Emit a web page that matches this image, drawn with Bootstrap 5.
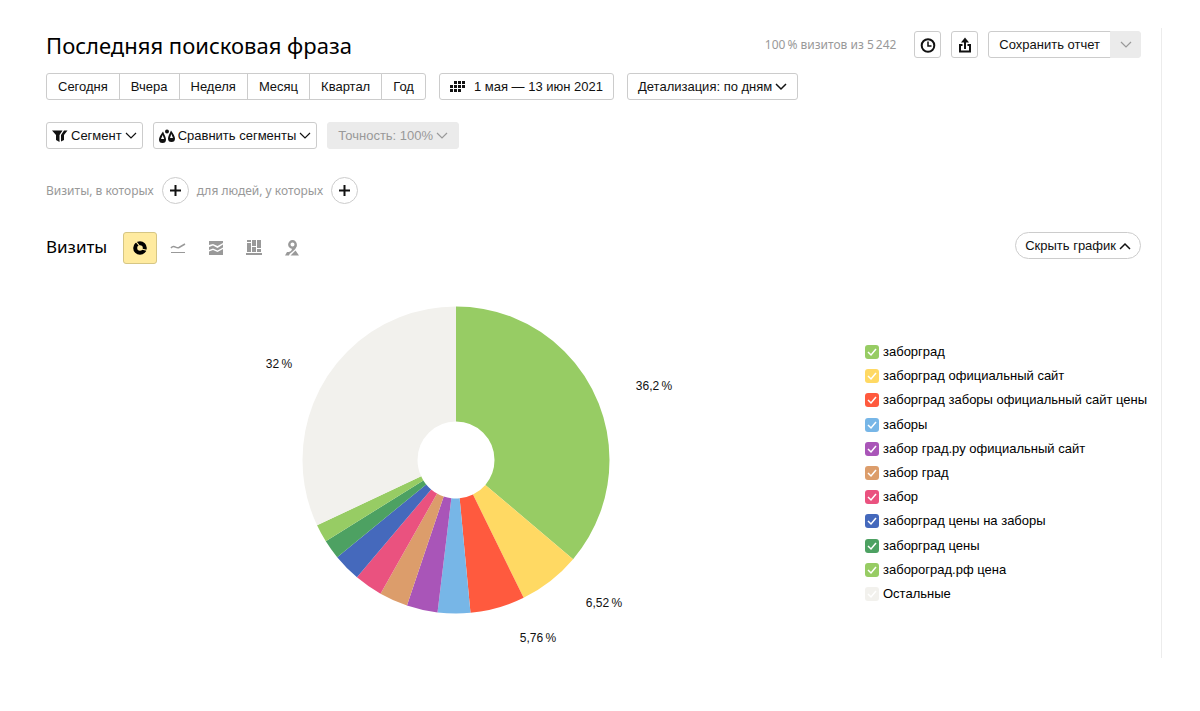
<!DOCTYPE html>
<html lang="ru">
<head>
<meta charset="utf-8">
<meta name="viewport" content="width=device-width, initial-scale=1">
<title>Последняя поисковая фраза</title>
<link href="https://cdn.jsdelivr.net/npm/bootstrap@5.3.0/dist/css/bootstrap.min.css" rel="stylesheet">
<style>
  body { font-family: "Liberation Sans", Arial, sans-serif; font-size: 13px; line-height: 16px; color: #000; background: #fff; }
  svg { display: block; flex: none; }
  .report { margin: 28px 38px 0 0; padding: 3px 20px 8px 46px; border-right: 1px solid #ececec; }
  .report-title { font: 400 22px/26px "Noto Sans", sans-serif; }
  .metric-title { font: 400 17px/30px "Noto Sans", sans-serif; }
  .hint { font: 400 12px/26px "Noto Sans", sans-serif; color: #999; }
  .btn {
    --bs-btn-font-size: 13px; --bs-btn-line-height: 16px;
    --bs-btn-padding-x: 10px; --bs-btn-padding-y: 0px;
    --bs-btn-border-radius: 3px; --bs-btn-color: #111; --bs-btn-bg: #fff;
    --bs-btn-border-color: #ccc; --bs-btn-hover-bg: #f7f7f7; --bs-btn-hover-border-color: #aaa;
    --bs-btn-disabled-bg: #ebebeb; --bs-btn-disabled-border-color: #ebebeb; --bs-btn-disabled-color: #999; --bs-btn-disabled-opacity: 1;
    height: 27px; display: inline-flex; align-items: center; justify-content: center; white-space: nowrap;
  }
  .period .btn { --bs-btn-padding-x: 11px; }
  .btn-tight { --bs-btn-padding-x: 5px; }
  .btn-square, .btn-circle { width: 27px; --bs-btn-padding-x: 0px; }
  .btn-circle { --bs-btn-border-radius: 50%; }
  .btn-caret { width: 31px; --bs-btn-padding-x: 0px; }
  .btn-pill { --bs-btn-border-radius: 14px; --bs-btn-padding-x: 9px; }
  .btn-view { width: 34px; height: 32px; --bs-btn-padding-x: 0px; --bs-btn-bg: transparent; --bs-btn-border-color: transparent; --bs-btn-color: #999;
    --bs-btn-active-bg: #ffeba0; --bs-btn-active-border-color: #d6c684; --bs-btn-active-color: #000; }
  .gap-icon { gap: 3px; }
  .gap-tool { gap: 10px; }
  .gap-range { gap: 13px; }
  .views { gap: 4px; }
  .row-header { margin-bottom: 15px; }
  .row-range { margin-bottom: 22px; }
  .row-filters, .row-people { margin-bottom: 28px; }
  .legend { width: 276px; height: 258px; white-space: nowrap; }
  .legend-check.form-check-input { width: 14px; height: 14px; margin: 0; border: 0; border-radius: 3px; flex: none; background-color: var(--tint); background-size: 14px; }
  .legend-check.form-check-input:checked[type=checkbox] { background-image: url("data:image/svg+xml,%3csvg xmlns='http://www.w3.org/2000/svg' viewBox='0 0 14 14'%3e%3cpath fill='none' stroke='%23fff' stroke-width='1.500' d='M3 7l3 3 5-6'/%3e%3c/svg%3e"); }
  .chart text { font-size: 12px; text-anchor: middle; fill: #111; }
  .chart circle { fill: none; stroke-width: 115; }
</style>
</head>
<body>
<main class="report">
  <header class="d-flex align-items-center gap-tool row-header">
    <h1 class="report-title mb-0 me-auto">Последняя поисковая фраза</h1>
    <span class="hint me-2">100&#8201;% визитов из 5&#8201;242</span>
    <button type="button" class="btn btn-square" aria-label="История">
      <svg width="16" height="16" viewBox="0 0 16 16" fill="none" stroke="currentColor" stroke-width="2"><circle cx="8" cy="8.500" r="6.300"/><path d="M8 4.500V9h3.500" stroke-width="1.500"/></svg>
    </button>
    <button type="button" class="btn btn-square" aria-label="Экспорт">
      <svg width="16" height="18" viewBox="0 0 16 18" fill="none" stroke="currentColor" stroke-width="2"><path d="M5.500 9H3v6.500h10V9h-2.500M8 13V5"/><path d="M8 1.500l4 5H4z" fill="currentColor" stroke="none"/></svg>
    </button>
    <div class="btn-group">
      <button type="button" class="btn">Сохранить отчет</button>
      <button type="button" class="btn btn-caret" disabled aria-label="Другие действия">
        <svg width="12" height="8" viewBox="0 0 12 8" fill="none" stroke="currentColor" stroke-width="1.200"><path d="M1 1l5 5 5-5"/></svg>
      </button>
    </div>
  </header>

  <div class="d-flex flex-wrap gap-range row-range">
    <div class="btn-group period" role="group" aria-label="Период">
      <button type="button" class="btn">Сегодня</button>
      <button type="button" class="btn">Вчера</button>
      <button type="button" class="btn">Неделя</button>
      <button type="button" class="btn">Месяц</button>
      <button type="button" class="btn">Квартал</button>
      <button type="button" class="btn">Год</button>
    </div>
    <button type="button" class="btn gap-2">
      <svg width="16" height="12" viewBox="0 0 16 12" fill="currentColor"><path d="M4 0h3v3H4zM8 0h3v3H8zM12 0h3v3h-3zM0 4h3v3H0zM4 4h3v3H4zM8 4h3v3H8zM12 4h3v3h-3zM0 8h3v3H0zM4 8h3v3H4zM8 8h3v3H8z"/></svg>
      1 мая — 13 июн 2021
    </button>
    <button type="button" class="btn gap-icon">Детализация: по дням
      <svg width="12" height="8" viewBox="0 0 12 8" fill="none" stroke="currentColor" stroke-width="1.500"><path d="M1 1l5 5 5-5"/></svg>
    </button>
  </div>

  <div class="d-flex flex-wrap gap-tool row-filters">
    <button type="button" class="btn btn-tight gap-icon">
      <svg width="16" height="14" viewBox="0 0 16 14" fill="currentColor"><path d="M0 1.500h10.500L7.500 6v7L4 11V6zM12 1.500h3.500L12 6v5L9 12.500V6z"/></svg>
      Сегмент
      <svg width="12" height="8" viewBox="0 0 12 8" fill="none" stroke="currentColor" stroke-width="1.200"><path d="M1 1l5 5 5-5"/></svg>
    </button>
    <button type="button" class="btn btn-tight gap-icon">
      <svg width="16" height="14" viewBox="0 0 16 14" fill="currentColor"><circle cx="8" cy="2.500" r="2"/><path fill-rule="evenodd" d="M4 2.500C1.500 6 0 8.500 0 10.500A3.500 3.500 0 0 0 7 10.500C7 8.500 5.500 6 4 2.500zM3.700 6L5.200 10H2zM12 1.500C10.500 5 9 7.500 9 9.500A3.500 3.500 0 0 0 16 9.500C16 7.500 14.500 5 12 1.500zM12.300 5L14 9H11z"/></svg>
      Сравнить сегменты
      <svg width="12" height="8" viewBox="0 0 12 8" fill="none" stroke="currentColor" stroke-width="1.200"><path d="M1 1l5 5 5-5"/></svg>
    </button>
    <button type="button" class="btn gap-icon" disabled>Точность: 100%
      <svg width="12" height="8" viewBox="0 0 12 8" fill="none" stroke="currentColor" stroke-width="1.200"><path d="M1 1l5 5 5-5"/></svg>
    </button>
  </div>

  <div class="d-flex flex-wrap align-items-center gap-2 row-people">
    <span class="hint">Визиты, в которых</span>
    <button type="button" class="btn btn-circle" aria-label="Добавить условие для визитов">
      <svg width="11" height="11" viewBox="0 0 11 11" stroke="currentColor" stroke-width="2"><path d="M5.500 0v11M0 5.500h11"/></svg>
    </button>
    <span class="hint">для людей, у которых</span>
    <button type="button" class="btn btn-circle" aria-label="Добавить условие для людей">
      <svg width="11" height="11" viewBox="0 0 11 11" stroke="currentColor" stroke-width="2"><path d="M5.500 0v11M0 5.500h11"/></svg>
    </button>
  </div>

  <div class="d-flex align-items-start mb-3">
    <h2 class="metric-title mb-0 me-3">Визиты</h2>
    <div class="d-flex views me-auto" role="group" aria-label="Вид графика">
      <button type="button" class="btn btn-view active" aria-label="Круговая диаграмма">
        <svg width="16" height="16" viewBox="0 0 16 16" fill="none" stroke="currentColor"><circle cx="8" cy="8" r="4.800" stroke-width="4"/><path d="M7.500 6L3.500 1M9.500 9l6 1.500" stroke="#ffeba0" stroke-width="1.200"/></svg>
      </button>
      <button type="button" class="btn btn-view" aria-label="Линии">
        <svg width="16" height="16" viewBox="0 0 16 16" fill="none" stroke="currentColor"><path d="M1 8c3-4 5 1 8-.5L15 4" stroke-width="1.500"/><path d="M1 12.500h14"/></svg>
      </button>
      <button type="button" class="btn btn-view" aria-label="Области">
        <svg width="16" height="16" viewBox="0 0 16 16" fill="currentColor"><path d="M1 1h14v2L9.500 6 5 4 1 5zM1 7l4-1.500L9.500 8 15 4.500v3L9.500 10.500 5 8.500 1 10zM1 11.500l4-1.500 4.500 2L15 9v6H1z"/></svg>
      </button>
      <button type="button" class="btn btn-view" aria-label="Столбцы">
        <svg width="16" height="16" viewBox="0 0 16 16" fill="currentColor"><path d="M0 13h16v2H0zM1 0h4v2H1zM1 3h4v9H1zM6 0h4v6H6zM6 7h4v5H6zM11 0h4v8h-4zM11 9h4v3h-4z"/></svg>
      </button>
      <button type="button" class="btn btn-view" aria-label="Карта">
        <svg width="16" height="16" viewBox="0 0 16 16"><circle cx="8.500" cy="4.500" r="3.200" fill="none" stroke="currentColor" stroke-width="2.400"/><path d="M12.800 5C12.500 9 9 11.500 5.500 14L8.500 8zM1 15.500L3 12h2l2-1-2 4.500zM6.500 15.500l5-5 3.500 5z" fill="currentColor"/></svg>
      </button>
    </div>
    <button type="button" class="btn btn-pill gap-icon">Скрыть график
      <svg width="12" height="8" viewBox="0 0 12 8" fill="none" stroke="currentColor" stroke-width="1.500"><path d="M1 7l5-5 5 5"/></svg>
    </button>
  </div>

  <div class="d-flex flex-wrap align-items-center">
    <div class="flex-fill d-flex justify-content-center">
      <svg class="chart" width="500" height="370" viewBox="-250 -180 500 370" role="img" aria-label="Доли поисковых фраз">
        <!-- each slice is an arc of a thick ring: dash length and offset are in degrees -->
        <g transform="rotate(-90)">
          <circle r="96" pathLength="360" stroke="#97cc64" stroke-dasharray="130.300 360"/>
          <circle r="96" pathLength="360" stroke="#ffd963" stroke-dasharray="23.500 360" stroke-dashoffset="-130.300"/>
          <circle r="96" pathLength="360" stroke="#ff5a3e" stroke-dasharray="20.700 360" stroke-dashoffset="-153.800"/>
          <circle r="96" pathLength="360" stroke="#77b6e7" stroke-dasharray="12.500 360" stroke-dashoffset="-174.500"/>
          <circle r="96" pathLength="360" stroke="#a955b8" stroke-dasharray="11.700 360" stroke-dashoffset="-187"/>
          <circle r="96" pathLength="360" stroke="#dc9d6b" stroke-dasharray="10.800 360" stroke-dashoffset="-198.700"/>
          <circle r="96" pathLength="360" stroke="#ea527f" stroke-dasharray="10.700 360" stroke-dashoffset="-209.500"/>
          <circle r="96" pathLength="360" stroke="#4569bc" stroke-dasharray="10.500 360" stroke-dashoffset="-220.200"/>
          <circle r="96" pathLength="360" stroke="#4da162" stroke-dasharray="7.300 360" stroke-dashoffset="-230.700"/>
          <circle r="96" pathLength="360" stroke="#97cc64" stroke-dasharray="6.800 360" stroke-dashoffset="-238"/>
          <circle r="96" pathLength="360" stroke="#f2f1ed" stroke-dasharray="115.200 360" stroke-dashoffset="-244.800"/>
        </g>
        <text x="198" y="-70">36,2&#8201;%</text>
        <text x="148" y="147">6,52&#8201;%</text>
        <text x="82" y="182">5,76&#8201;%</text>
        <text x="-177" y="-92">32&#8201;%</text>
      </svg>
    </div>
    <ul class="legend list-unstyled d-flex flex-column justify-content-between mt-3 mb-0">
      <li><label class="d-flex align-items-center gap-1"><input class="form-check-input legend-check" style="--tint:#97cc64" type="checkbox" checked>заборград</label></li>
      <li><label class="d-flex align-items-center gap-1"><input class="form-check-input legend-check" style="--tint:#ffd963" type="checkbox" checked>заборград официальный сайт</label></li>
      <li><label class="d-flex align-items-center gap-1"><input class="form-check-input legend-check" style="--tint:#ff5a3e" type="checkbox" checked>заборград заборы официальный сайт цены</label></li>
      <li><label class="d-flex align-items-center gap-1"><input class="form-check-input legend-check" style="--tint:#77b6e7" type="checkbox" checked>заборы</label></li>
      <li><label class="d-flex align-items-center gap-1"><input class="form-check-input legend-check" style="--tint:#a955b8" type="checkbox" checked>забор град.ру официальный сайт</label></li>
      <li><label class="d-flex align-items-center gap-1"><input class="form-check-input legend-check" style="--tint:#dc9d6b" type="checkbox" checked>забор град</label></li>
      <li><label class="d-flex align-items-center gap-1"><input class="form-check-input legend-check" style="--tint:#ea527f" type="checkbox" checked>забор</label></li>
      <li><label class="d-flex align-items-center gap-1"><input class="form-check-input legend-check" style="--tint:#4569bc" type="checkbox" checked>заборград цены на заборы</label></li>
      <li><label class="d-flex align-items-center gap-1"><input class="form-check-input legend-check" style="--tint:#4da162" type="checkbox" checked>заборград цены</label></li>
      <li><label class="d-flex align-items-center gap-1"><input class="form-check-input legend-check" style="--tint:#97cc64" type="checkbox" checked>забороград.рф цена</label></li>
      <li><label class="d-flex align-items-center gap-1"><input class="form-check-input legend-check" style="--tint:#f2f1ed" type="checkbox" checked>Остальные</label></li>
    </ul>
  </div>
</main>
<script src="https://cdn.jsdelivr.net/npm/bootstrap@5.3.0/dist/js/bootstrap.bundle.min.js"></script>
</body>
</html>
